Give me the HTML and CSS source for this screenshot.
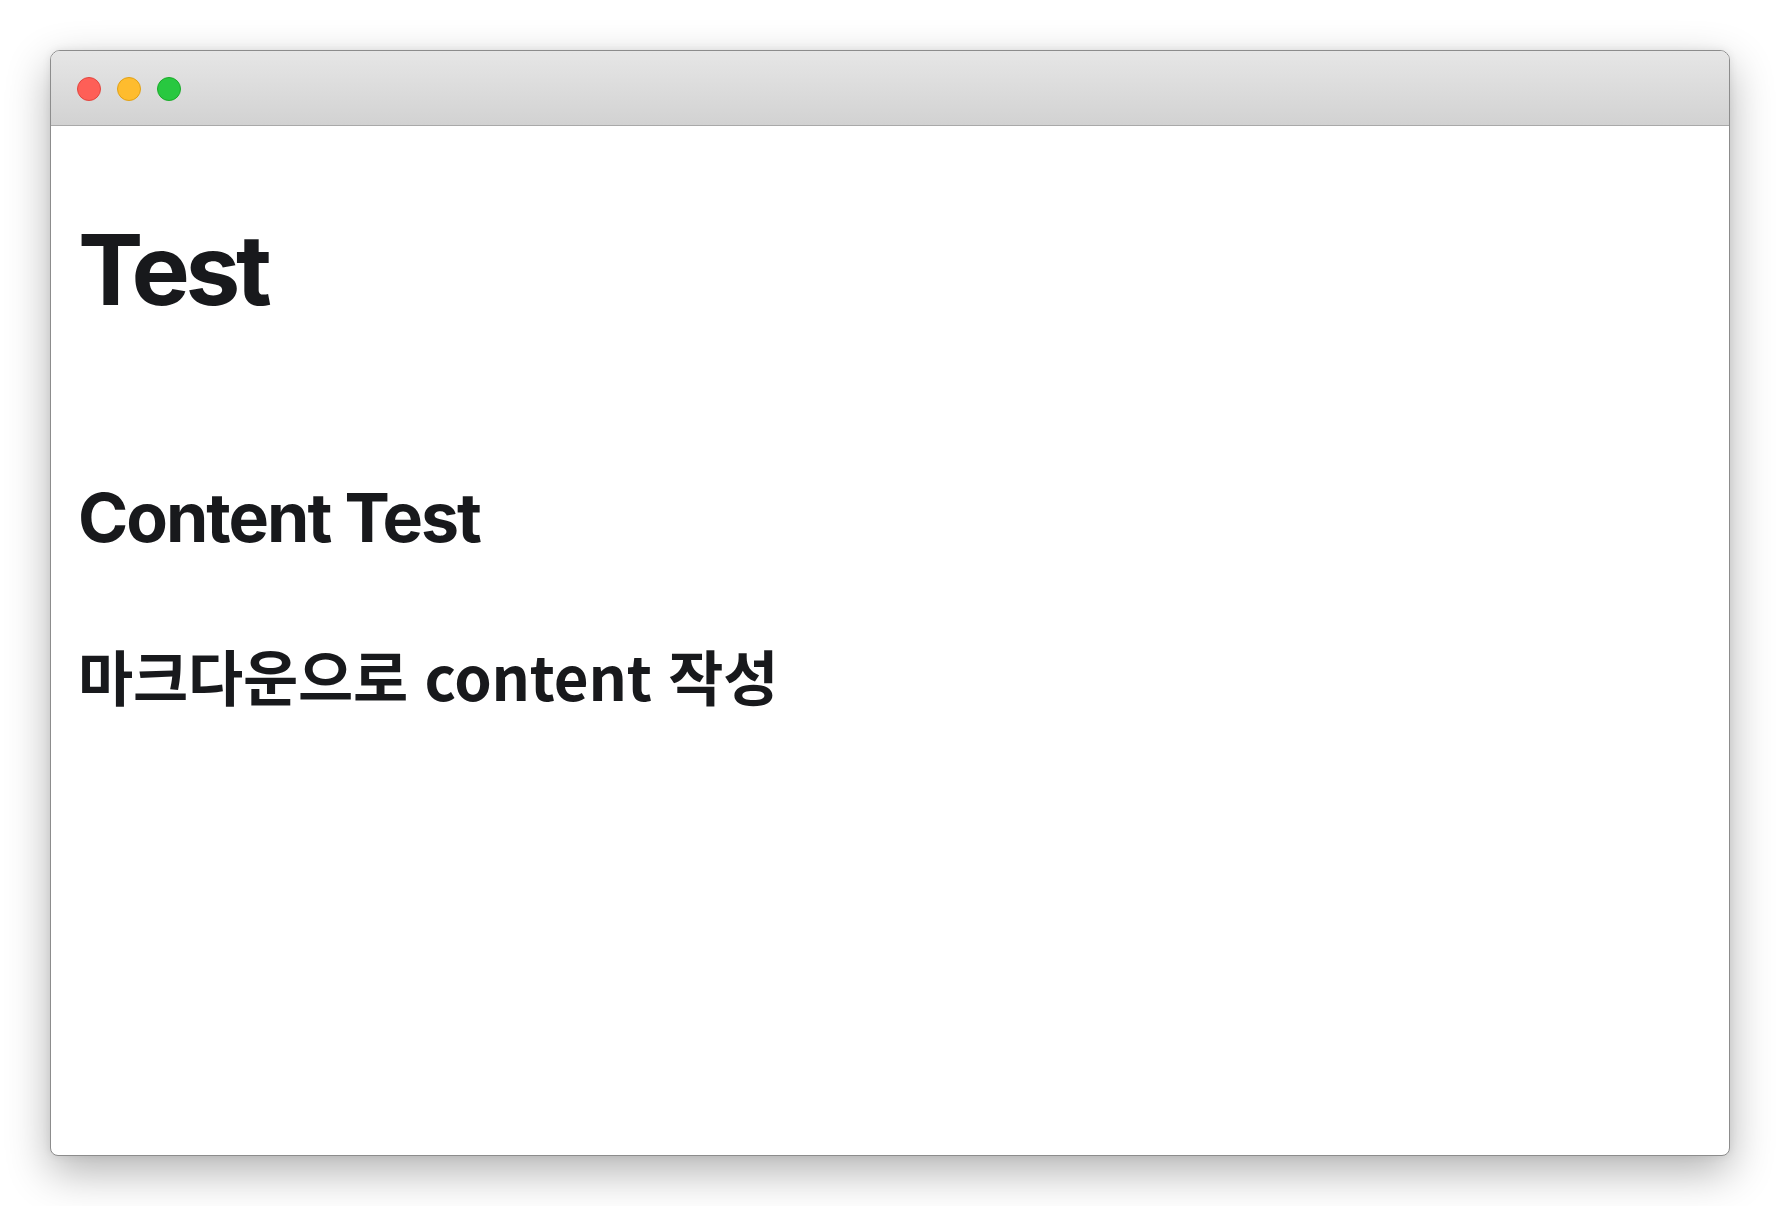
FILE: index.html
```html
<!DOCTYPE html>
<html lang="ko">
<head>
  <meta charset="UTF-8">
  <title>Test</title>
  <link rel="stylesheet" href="styles.css">
</head>
<body>
  <div class="window">
    <!-- Title bar -->
    <div class="titlebar">
      <span class="light light-close"></span>
      <span class="light light-min"></span>
      <span class="light light-max"></span>
    </div>

    <!-- Page content -->
    <div class="content">
      <h1 class="title">Test</h1>
      <h2 class="subtitle">Content Test</h2>
      <h2 class="body-line">마크다운으로 content 작성</h2>
    </div>
  </div>
</body>
</html>
```

FILE: styles.css
```css
body {
  margin: 0;
  padding: 50px;
  background: #ffffff;
  font-family: 'Inter', 'Noto Sans CJK KR', sans-serif;
  color: #18191c;
}

/* Window */
.window {
  height: 1106px;
  box-sizing: border-box;
  border: 1px solid #8c8c8c;
  border-radius: 10px 10px 8px 8px;
  background: #ffffff;
  overflow: hidden;
  box-shadow:
    0 16px 44px rgba(0, 0, 0, 0.3),
    0 0 8px rgba(0, 0, 0, 0.08);
}

.titlebar {
  height: 75px;
  box-sizing: border-box;
  display: flex;
  align-items: center;
  gap: 16px;
  padding: 1px 0 0 26px;
  background: linear-gradient(180deg, #e6e6e6 0%, #d2d2d2 100%);
  border-bottom: 1px solid #a9a9a9;
}

.light {
  width: 24px;
  height: 24px;
  box-sizing: border-box;
  border-radius: 50%;
}

.light-close {
  background: #fe5f57;
  border: 1px solid #e2463f;
}

.light-min {
  background: #febc2e;
  border: 1px solid #e1a116;
}

.light-max {
  background: #28c840;
  border: 1px solid #1aab29;
}

/* Content */
.content {
  padding: 0 27px;
}

.title {
  font-size: 98px;
  font-weight: 700;
  letter-spacing: -4.3px;
  line-height: 1.2;
  margin: 85px 0 0;
}

.subtitle {
  font-size: 68px;
  font-weight: 700;
  letter-spacing: -2px;
  line-height: 1.2;
  margin: 148px 0 0;
}

.body-line {
  font-family: 'Noto Sans CJK KR', sans-serif;
  font-size: 60px;
  font-weight: 700;
  letter-spacing: -0.2px;
  line-height: 1.2;
  margin: 81px 0 0;
}
```
